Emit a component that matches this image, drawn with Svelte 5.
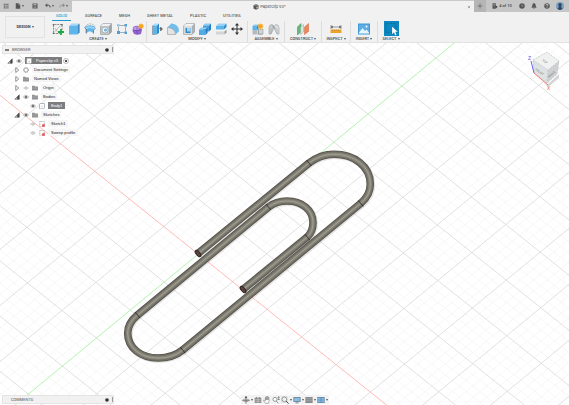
<script>
  const blue = '#5fb4ea';
  const deep = '#2f8ccc';
  const cube = (x, y, w, h, d, top, front, side) =>
    `<path d="M${x} ${y + d}l${d}-${d}h${w - d}l-${d} ${d}z" fill="${top}"/>` +
    `<path d="M${x} ${y + d}h${w - d}v${h - d}h-${w - d}z" fill="${front}"/>` +
    `<path d="M${x + w - d} ${y + d}l${d}-${d}v${h - d}l-${d} ${d}z" fill="${side}"/>`;
  const star = (x, y) =>
    `<path d="M${x} ${y - 6}l1.5 3 3.2-1-1 3.2 3 1.3-3 1.5 1 3.1-3.2-1-1.5 3-1.4-3-3.2 1 1-3.1-3-1.5 3-1.3-1-3.2 3.2 1z" fill="#f7a51c"/>`;

  // Every drawing sits in a 24 x 24 box.
  const art = {
    sketch: `<path d="M3 4v17h13M20 14V3H3" fill="none" stroke="#666" stroke-width="1.4" stroke-dasharray="4 1.5"/><path d="M5 18L17 5M6 10l5 8" stroke="#999" fill="none" stroke-width="1.2"/><path d="M1.500 2h3v3h-3zM18.500 2h3v3h-3zM1.500 19h3v3h-3z" fill="#666"/><path d="M18 12v12M12 18h12" stroke="#23a645" stroke-width="3.600"/>`,
    extrude: cube(3, 1, 20, 22, 4, '#a5d8f7', blue, deep) + `<path d="M3 23V6M22 2v17" stroke="#76838d" fill="none"/>`,
    revolve: `<path d="M1 9c3-6 19-7 22 1l-3 2v9l-5-3c-2-2-5-2-7 0l-5 3V12z" fill="${blue}"/><path d="M1 10c5-5 17-5 22 1l-3 3c-4-4-11-5-15-1z" fill="#97d1f5"/><path d="M1 9l4 4v8M23 11l-4 3v7" stroke="#70777b" fill="none" stroke-width="1.400"/><path d="M3 7c3-7 16-7 19 0" stroke="#777" fill="none" stroke-dasharray="3 2"/>`,
    hole: cube(1, 1, 22, 22, 5, '#eef0f1', '#c3c7ca', '#9da4a9') + `<circle cx="10" cy="14" r="6" fill="#f6f7f8" stroke="#7b8286"/><circle cx="11" cy="14" r="3" fill="${blue}"/><path d="M1 6l5-5h17v17l-5 5H1z" fill="none" stroke="#858c90"/>`,
    pattern: `<path d="M5 5h14M5 19h13M5 7v10M19 8v9" stroke="#808b91" stroke-width="1.300"/><g fill="#4c9fdc"><path d="M2 16h6v6H2zM17 2h5v5h-5zM17 17h5v5h-5z"/></g><path d="M2 2h5v5H2z" fill="#9bc8e7"/>`,
    form: `<path d="M2 8q8-5 15 0l3 5-2 9q-7 3-14 0L1 16z" fill="#9263cf"/><path d="M3 9q7-4 13 0l-4 5H3z" fill="#bf9be9"/><path d="M2 14q8 3 17 0M10 8v15" stroke="#6640a5" fill="none"/>` + star(18, 6),
    presspull: cube(3, 1, 13, 22, 4, '#b2ddf6', blue, deep) + `<path d="M3 5v18h6" stroke="#777" fill="none"/><path d="M16 11h4M19 8l4 4-4 4z" stroke="#555" fill="#555"/>`,
    fillet: `<path d="M1 23V9l8-8q14 2 15 15l-7 7z" fill="#c2c7ca"/><path d="M9 1q14 1 15 15l-7 7Q16 10 1 9z" fill="#72bdec"/><path d="M1 9v14h16Q16 10 1 9z" fill="#e1e3e5" stroke="#92989c"/>`,
    shell: cube(1, 1, 22, 22, 5, '#f2f3f4', '#d9dcde', '#abb1b5') + `<path d="M5 10h10v10H5z" fill="${deep}"/><path d="M8 10h7v7H8z" fill="#a4d5f3"/><path d="M1 6l5-5h17v17l-5 5H1z" fill="none" stroke="#858c90"/>`,
    combine: cube(8, 1, 16, 16, 4, '#8ccbf3', '#459fdb', '#247dbd') + cube(0, 9, 17, 15, 4, '#8ccbf3', '#53aae4', '#247dbd'),
    split: cube(2, 13, 21, 10, 4, '#f3f4f4', '#d2d5d7', '#989ea2') + cube(2, 1, 21, 12, 5, '#98d1f5', blue, deep),
    move: `<path d="M12 3v18M3 12h18" stroke="#333" stroke-width="2"/><path d="M12 0l4 5H8zM12 24l4-5H8zM0 12l5-4v8zM24 12l-5-4v8z" fill="#333"/>`,
    component: `<path d="M1 13h10v10H1z" fill="#b6babd"/><path d="M12 12h9v11h-9z" fill="#8f969a"/>` + cube(1, 3, 12, 11, 3, '#8ccbf3', blue, deep) + `<path d="M13 12h9v10h-9z" fill="#d0d4d7" stroke="#858c90"/>` + star(17, 6),
    joint: `<path d="M2 22V9q1-6 6-6 4 1 3 6l-1 5-4 8z" fill="#c9cdd0" stroke="#898f93"/><path d="M6 22v-9l4-4" fill="none" stroke="#8e9599"/><path d="M22 22V9q-1-6-6-6-4 1-3 6l1 5 4 8z" fill="#dde0e2" stroke="#898f93"/><path d="M18 22v-9l-4-4" fill="none" stroke="#8e9599"/><path d="M9 5l5 8" stroke="#777"/>`,
    construct: `<path d="M1 8l7-7v16l-7 7z" fill="#62b77a" stroke="#378f50"/><path d="M7 8l6-5v15l-6 5z" fill="#d9e6de" stroke="#8ba797"/><path d="M15 8l8-7v16l-8 6z" fill="#ea875b" stroke="#d2633a"/>`,
    inspect: `<path d="M2 8h20M2 4v8M22 4v8M2 8l3-2v4zM22 8l-3-2v4z" stroke="#666" stroke-width="1.300" fill="#666"/><path d="M1 13h22v7H1z" fill="#eaa42c"/><path d="M5 13v2M9 13v3M13 13v2M17 13v3" stroke="#a3752a"/>`,
    insert: `<path d="M0 1h24v22H0z" fill="#3f98d7"/><path d="M2 3h20v18H2z" fill="#5cade4"/><path d="M2 19l7-9 5 6 3-3 5 6v2H2z" fill="#e8f5fd"/><circle cx="17" cy="7" r="2" fill="#fff"/>`,
    select: `<path d="M0 0h24v24H0z" fill="#0d87bf"/><path d="M3 4h16v14H3z" fill="none" stroke="#14576f" stroke-dasharray="2 2"/><path d="M13 9v12l3-3 2 5 2-1-2-5h4z" fill="#fff"/>`,
    apps: `<path d="M3 3h5v5H3zM10 3h5v5h-5zM17 3h5v5h-5zM3 10h5v5H3zM10 10h5v5h-5zM17 10h5v5h-5zM3 17h5v5H3zM10 17h5v5h-5zM17 17h5v5h-5z" fill="#666"/>`,
    file: `<path d="M3 1h12l6 6v16H3z" fill="#555"/><path d="M15 1v6h6" stroke="#bbb" fill="none" stroke-width="2"/>`,
    save: `<path d="M2 2h20v20H2z" fill="#555"/><path d="M6 3h12v7H6zM7 14h10v7H7z" fill="#aaa"/><path d="M8 17h8" stroke="#555" stroke-width="2"/>`,
    undo: `<path d="M6 9h9q6 1 6 9" fill="none" stroke="#555" stroke-width="4"/><path d="M0 9l9-8v16z" fill="#555"/>`,
    redo: `<path d="M18 9H9q-6 1-6 9" fill="none" stroke="#888" stroke-width="3"/><path d="M24 9l-9-8v16z" fill="#888"/>`,
    doc: `<path d="M2 5l10-4 10 4v13l-10 5-10-5z" fill="#555"/><path d="M2 5l10 4 10-4-10-4z" fill="#888"/><path d="M14 12l5-2v6l-5 3z" fill="#ddd"/>`,
    close: `<path d="M5 5l14 14M19 5L5 19" stroke="#666" stroke-width="3"/>`,
    plus: `<path d="M12 2v20M2 12h20" stroke="#666" stroke-width="3"/>`,
    jobs: `<path d="M2 1h13v22H2z" fill="#555"/><path d="M5 6h7M5 11h6" stroke="#bbb" stroke-width="2"/><path d="M12 10l11 4-7 8z" fill="#444"/>`,
    clock: `<circle cx="12" cy="12" r="11" fill="#555"/><path d="M12 5v8h5" fill="none" stroke="#aaa" stroke-width="2.500"/>`,
    bell: `<path d="M1 19l4-5V9q1-6 5-7V0h4v2q4 1 5 7v5l4 5z" fill="#555"/><path d="M9 20h6l-3 4z" fill="#555"/>`,
    help: `<circle cx="12" cy="12" r="11" fill="#555"/><path d="M8 10q0-5 4-5 5 0 4 4-1 2-4 4v2M12 17v3" fill="none" stroke="#eee" stroke-width="2.500"/>`,
    user: `<circle cx="12" cy="12" r="12" fill="#7f9fc0"/><path d="M7 8q0-5 5-5t5 5q0 5-3 7l6 3q-3 6-8 6t-8-6l6-3q-3-2-3-7z" fill="#2d4765"/>`,
    open: `<path d="M21 3v18H3z" fill="#bbb" stroke="#444" stroke-width="2"/><path d="M21 3v18h-8V12z" fill="#444"/>`,
    shut: `<path d="M7 2l12 10L7 22z" fill="#fff" stroke="#555" stroke-width="2.500"/>`,
    eye: `<path d="M1 12Q12-1 23 12 12 25 1 12z" fill="#ddd" stroke="#999" stroke-width="2"/><circle cx="12" cy="12" r="5" fill="#777"/>`,
    hidden: `<path d="M2 12Q12 0 22 12 12 24 2 12z" fill="#f7f7f7" stroke="#aaa" stroke-width="2"/><circle cx="12" cy="12" r="3.500" fill="none" stroke="#aaa" stroke-width="2"/>`,
    part: `<path d="M3 3l3-2h16v18l-4 4H3z" fill="#fff" stroke="#999" stroke-width="2"/><path d="M9 13h5v6" stroke="#9ab" fill="none" stroke-width="2"/>`,
    gear: `<circle cx="12" cy="12" r="8" fill="#fff" stroke="#999" stroke-width="3"/><circle cx="12" cy="12" r="10" fill="none" stroke="#888" stroke-width="3" stroke-dasharray="4 4"/>`,
    folder: `<path d="M0 3h10l2 3h12v16H0z" fill="#929292"/><path d="M0 9h24M0 14h24" stroke="#bbb"/>`,
    body: `<path d="M2 5q0-3 4-3h16v17q-1 4-5 4H2z" fill="#fff" stroke="#667785" stroke-width="2"/><path d="M9 12h4v6" stroke="#89a" fill="none" stroke-width="1.500"/>`,
    profile: `<path d="M3 2h18v19H3z" fill="#fff" stroke="#777" stroke-width="2" stroke-dasharray="4 2"/><path d="M13 13h10v10H13z" fill="#e6474b"/>`,
    radio: `<circle cx="12" cy="12" r="10" fill="#fff" stroke="#777" stroke-width="2"/><circle cx="12" cy="12" r="4.500" fill="#333"/>`,
    dot: `<circle cx="12" cy="12" r="11" fill="#333"/>`,
    minus: `<path d="M0 8h24v8H0z" fill="#444"/>`,
    orbit: `<path d="M12 1v22M1 13h22" stroke="#666" stroke-width="2.500"/><ellipse cx="12" cy="13" rx="9" ry="4" fill="none" stroke="#888" stroke-width="2"/><path d="M12 0l4 6H8z" fill="#555"/>`,
    look: `<path d="M2 6h20v15H2zM5 3h5v4H5zM14 3h5v4h-5z" fill="#8d8d8d"/><path d="M4 11h16M4 16h16M12 7v14" stroke="#ddd" stroke-width="1.500"/>`,
    pan: `<path d="M7 22l-6-9 2-1 4 3V5h2v7V2h3v10V2h3v10l1-8h2v12l-2 6z" fill="#fff" stroke="#777" stroke-width="1.600"/>`,
    zoom: `<circle cx="9" cy="10" r="6" fill="#fff" stroke="#777" stroke-width="2.200"/><path d="M13 15l6 7M20 2v10M17 5l3-3 3 3M17 9l3 3 3-3" fill="none" stroke="#666" stroke-width="2"/>`,
    fit: `<path d="M2 2h17v17H2z" fill="none" stroke="#999" stroke-dasharray="4 2"/><circle cx="10" cy="10" r="7" fill="#eef6fb" stroke="#777" stroke-width="2.200"/><path d="M15 15l8 8" stroke="#555" stroke-width="3"/>`,
    display: `<path d="M1 3h22v15H1z" fill="#6f8fa8"/><path d="M4 6h16v9H4z" fill="#8dbddd"/><path d="M7 21h10M12 17v4" stroke="#777" stroke-width="2"/>`,
    grid: `<path d="M1 3h22v18H1z" fill="#8c8c8c"/><path d="M1 8h22M1 14h22" stroke="#c8c8c8"/>`,
    views: `<path d="M1 3h22v18H1z" fill="#5886ab"/><path d="M3 5h8v6H3zM13 5h8v6h-8zM3 13h8v6H3zM13 13h8v6h-8z" fill="#86b7dc"/>`
  };

  const tabs = ['SOLID', 'SURFACE', 'MESH', 'SHEET METAL', 'PLASTIC', 'UTILITIES'];
  const groups = [
    { label: 'CREATE', tools: ['sketch', 'extrude', 'revolve', 'hole', 'pattern', 'form'] },
    { label: 'MODIFY', tools: ['presspull', 'fillet', 'shell', 'combine', 'split', 'move'] },
    { label: 'ASSEMBLE', tools: ['component', 'joint'] },
    { label: 'CONSTRUCT', tools: ['construct'] },
    { label: 'INSPECT', tools: ['inspect'] },
    { label: 'INSERT', tools: ['insert'] },
    { label: 'SELECT', tools: ['select'] }
  ];
  const tree = [
    { level: 0, icons: ['open', 'eye'], label: 'Paperclip v3', root: true },
    { level: 1, icons: ['shut', 'gear'], label: 'Document Settings' },
    { level: 1, icons: ['shut', 'folder'], label: 'Named Views' },
    { level: 1, icons: ['shut', 'hidden', 'folder'], label: 'Origin' },
    { level: 1, icons: ['open', 'eye', 'folder'], label: 'Bodies' },
    { level: 2, icons: ['eye', 'body'], label: 'Body1', selected: true },
    { level: 1, icons: ['open', 'eye', 'folder'], label: 'Sketches' },
    { level: 2, icons: ['hidden', 'profile'], label: 'Sketch1' },
    { level: 2, icons: ['hidden', 'profile'], label: 'Sweep profile' }
  ];
  const nav = [
    ['orbit', true], ['look', false], ['pan', false], ['zoom', false],
    ['fit', true], ['display', true], ['grid', true], ['views', true]
  ];

  // Ground plane: two screen directions, five minor steps to a major one.
  const origin = [198.2, 254.1];
  const xDir = [34.45, 27.6];
  const yDir = [33.95, -28];
  const STEPS = 5;
  const span = 16;
  function line(shift, along, n) {
    const cx = origin[0] + shift[0] * n;
    const cy = origin[1] + shift[1] * n;
    return `M${cx - along[0] * span} ${cy - along[1] * span}L${cx + along[0] * span} ${cy + along[1] * span}`;
  }
  let minor = '';
  let major = '';
  for (let i = -span * STEPS; i <= span * STEPS; i++) {
    const d = line(xDir, yDir, i / STEPS) + line(yDir, xDir, i / STEPS);
    if (i % STEPS) minor += d;
    else if (i) major += d;
  }
  const xAxis = line(yDir, xDir, 0);
  const yAxis = line(xDir, yDir, 0);

  const wire =
    'M198 253.500L309 163C317 157 325 154.300 334 154.300C354 154.300 370.300 166 370.300 184C370.300 192 367 198 360.700 203.300' +
    'L182.700 350C176 355.500 168 358 158 358C141 358 127.700 348 127.700 333C127.700 326 131 320.500 137.500 315' +
    'L268.500 207C274 202.700 280 201 287 201C302 201 313 210 313 222.500C313 228 311.500 233 307.300 237L243 289.500';
  const seams = [[309, 163], [360.7, 203.3], [182.7, 350], [137.5, 315], [268.5, 207], [307.3, 237]];
  const ends = [[198, 253.5], [243, 289.5]];
</script>

{#snippet icon(name, size)}
  <svg class="icon {size}" viewBox="0 0 24 24" aria-hidden="true">{@html art[name]}</svg>
{/snippet}

{#snippet caret()}<span class="caret" aria-hidden="true"></span>{/snippet}

<div class="app">
  <header class="titlebar">
    <div class="quick">
      <button aria-label="Data panel">{@render icon('apps', 's')}</button>
      <button class="file" aria-label="File">{@render icon('file', 's')}{@render caret()}</button>
      <button aria-label="Save">{@render icon('save', 's')}</button>
      <button class="undo" aria-label="Undo">{@render icon('undo', 's')}{@render caret()}</button>
      <button aria-label="Redo">{@render icon('redo', 's')}{@render caret()}</button>
    </div>
    <div class="document">
      <span class="name">{@render icon('doc', 's')}Paperclip v3*</span>
      <button aria-label="Close">{@render icon('close', 'xs')}</button>
    </div>
    <div class="account">
      <button class="new" aria-label="New design">{@render icon('plus', 's')}</button>
      <button class="jobs">{@render icon('jobs', 's')}4 of 10</button>
      <button aria-label="Job status">{@render icon('clock', 's')}</button>
      <button aria-label="Notifications">{@render icon('bell', 's')}</button>
      <button aria-label="Help">{@render icon('help', 's')}</button>
      <button aria-label="Profile">{@render icon('user', 'm')}</button>
    </div>
  </header>

  <div class="ribbon">
    <button class="design">DESIGN{@render caret()}</button>
    <div class="tools">
      <nav class="tabs">
        {#each tabs as tab, i}
          <button class:active={i === 0}>{tab}</button>
        {/each}
      </nav>
      <div class="groups">
        {#each groups as group}
          <section class="group {group.label.toLowerCase()}">
            <div class="row">
              {#each group.tools as tool}
                <button class="tool" aria-label={tool}>{@render icon(tool, tool === 'select' ? 'xl' : 'l')}</button>
              {/each}
            </div>
            <button class="label">{group.label}{@render caret()}</button>
          </section>
        {/each}
      </div>
    </div>
  </div>

  <main>
    <svg class="canvas" viewBox="0 43 569 362" preserveAspectRatio="xMidYMid slice" role="img" aria-label="Paperclip model">
      <path d={minor} class="minor" />
      <path d={major} class="major" />
      <path d={xAxis} class="x-axis" />
      <path d={yAxis} class="y-axis" />
      <g fill="none" stroke-linejoin="round">
        <path d={wire} class="shadow" transform="translate(1 1)" />
        <path d={wire} stroke="#55534b" stroke-width="7.600" />
        <path d={wire} stroke="#716f64" stroke-width="6" />
        <path d={wire} stroke="#87857a" stroke-width="3.400" />
        <path d={wire} stroke="#a3a194" stroke-width="1" />
      </g>
      {#each seams as [x, y]}
        <path d="M{x - 2.5} {y - 3}L{x + 2.5} {y + 3}" class="seam" />
      {/each}
      {#each ends as [x, y]}
        <ellipse cx={x} cy={y} rx="2" ry="4" transform="rotate(-39 {x} {y})" class="end" />
      {/each}
    </svg>

    <aside class="browser">
      <div class="bar">
        {@render icon('minus', 'xs')}<span>BROWSER</span>{@render icon('dot', 'xs')}<i></i>
      </div>
      <ul>
        {#each tree as node}
          <li class="level{node.level}">
            {#each node.icons as name}
              <span class="slot">{@render icon(name, 's')}</span>
            {/each}
            <button class="node" class:root={node.root} class:selected={node.selected}>
              {#if node.root}{@render icon('part', 's')}{/if}{node.label}
            </button>
            {#if node.root}{@render icon('radio', 's')}{/if}
          </li>
        {/each}
      </ul>
    </aside>

    <svg class="viewcube" viewBox="526 50 36 42" role="img" aria-label="View cube">
      <path d="M535 73l12 12 12-11v4l-11 9z" fill="#d5d5d5" />
      <path d="M533 60l14-8 12 9-11 9z" fill="#f0f1f1" />
      <path d="M533 60l15 10-1 13-13-10z" fill="#dfe2e2" />
      <path d="M548 70l11-9-2 13-10 9z" fill="#cdd1d1" />
      <path d="M533 60l14-8 12 9-2 13-10 9-13-10zM533 60l15 10 11-9M548 70l-1 13" fill="none" stroke="#b4b8b8" stroke-dasharray="2 1" stroke-width="0.600" />
      <text x="542" y="61" transform="rotate(30 542 61)">TOP</text>
      <text x="535" y="70" transform="rotate(36 535 70)">FRONT</text>
      <text x="549" y="78" transform="rotate(-40 549 78)">RIGHT</text>
      <path d="M534 73l-3-12" stroke="#6464ee" />
      <path d="M534 73l14 12" stroke="#ee7c72" />
      <text class="axis z" x="528" y="60">Z</text>
      <text class="axis x" x="547" y="90">X</text>
    </svg>

    <div class="bar comments"><span>COMMENTS</span>{@render icon('dot', 'xs')}<i></i></div>

    <nav class="navbar">
      {#each nav as [name, menu]}
        <button aria-label={name}>{@render icon(name, 'm')}{#if menu}{@render caret()}{/if}</button>
      {/each}
    </nav>
  </main>
</div>

<style>
  :global(body) { margin: 0; }
  .app {
    height: 100vh;
    display: flex;
    flex-direction: column;
    overflow: hidden;
    background: #f1f1f1;
    color: #444;
    font: 500 4px/6px Roboto, "Liberation Sans", sans-serif;
  }
  button {
    display: flex;
    align-items: center;
    padding: 0;
    border: 0;
    background: none;
    color: inherit;
    font: inherit;
    white-space: nowrap;
  }
  .icon { display: block; flex: none; }
  .xs { width: 4px; height: 4px; }
  .s { width: 6px; height: 6px; }
  .m { width: 8px; height: 8px; }
  .l { width: 12px; height: 12px; }
  .xl { width: 15px; height: 15px; }
  .caret {
    flex: none;
    margin-left: 1px;
    border: 1px solid transparent;
    border-top: 2px solid #555;
    border-bottom: 0;
  }

  .titlebar {
    display: flex;
    height: 12px;
    flex: none;
    box-shadow: inset 0 1px #c9c9c9;
  }
  .quick {
    display: flex;
    align-items: center;
    gap: 4px;
    width: 69px;
    padding-left: 3px;
    background: #c6c6c6;
  }
  .quick .file { margin: 0 4px 0 2px; }
  .quick .undo { margin: 0 1px 0 3px; }
  .document {
    flex: 1;
    display: flex;
    align-items: center;
    padding: 1px 3px 0 0;
    font-family: Inter, sans-serif;
    font-weight: 400;
  }
  .document .name {
    flex: 1;
    display: flex;
    justify-content: center;
    align-items: center;
    gap: 1px;
  }
  .account {
    display: flex;
    align-items: center;
    justify-content: space-between;
    width: 90px;
    padding-right: 5px;
    background: #c6c6c6;
  }
  .account .new {
    align-self: stretch;
    width: 12px;
    justify-content: center;
    background: #b5b5b5;
  }
  .jobs { gap: 1px; margin-right: 1px; }

  .ribbon {
    display: flex;
    height: 31px;
    flex: none;
    box-sizing: border-box;
    border-bottom: 1px solid #e2e2e2;
  }
  .design {
    width: 40px;
    height: 22px;
    margin: 4px 5px 0;
    justify-content: center;
    border: 1px solid #e2e2e2;
    font-weight: 700;
  }
  .tabs { display: flex; gap: 17px; height: 9px; padding-left: 2px; color: #555; }
  .tabs button { box-sizing: border-box; border-bottom: 1px solid transparent; }
  .tabs .active { margin-right: -3px; padding: 0 4px; border-color: #1b9ad2; color: #1b9ad2; }
  .groups { display: flex; }
  .group {
    display: flex;
    flex-direction: column;
    align-items: center;
    height: 21px;
    padding: 0 2px;
    border-right: 1px solid #ddd;
  }
  .create { padding: 0; }
  .construct { padding: 0 10px; }
  .inspect { padding: 0 6px; }
  .insert, .select { padding: 0 5px; }
  .group:last-child { border: 0; }
  .row { display: flex; height: 15px; align-items: center; }
  .tool { width: 16px; justify-content: center; }
  .label { margin: 0 -8px; }

  main { position: relative; flex: 1; min-height: 0; background: #fff; }
  .canvas { position: absolute; inset: 0; width: 100%; height: 100%; }
  .canvas path { fill: none; }
  .minor { stroke: #f1f1f1; stroke-width: 0.600; }
  .major { stroke: #d9d9d9; stroke-width: 0.800; }
  .x-axis { stroke: #ffa9a4; stroke-width: 0.800; }
  .y-axis { stroke: #9ff09a; stroke-width: 0.800; }
  .shadow { stroke: #00000018; stroke-width: 8; }
  .seam { stroke: #2b2a26; stroke-width: 0.900; }
  .end { fill: #5c3f3a; stroke: #222; stroke-width: 0.900; }

  .bar {
    display: flex;
    align-items: center;
    box-sizing: border-box;
    width: 112px;
    height: 9px;
    padding-left: 2px;
    gap: 3px;
    background: #f1f1f1;
    border: 1px solid #e4e4e4;
    color: #777;
  }
  .bar span { flex: 1; }
  .bar i { width: 1px; height: 5px; background: #999; }
  .browser { position: absolute; left: 2px; top: 2px; }
  .comments { position: absolute; left: 2px; bottom: 1px; padding-left: 8px; }
  ul { list-style: none; margin: 2px 0 0; padding: 0; font-family: "Liberation Sans", sans-serif; font-weight: 400; }
  li { display: flex; align-items: center; height: 9px; color: #222; }
  .level0 { padding-left: 3px; }
  .level1 { padding-left: 10px; }
  .level2 { padding-left: 26px; }
  .slot { width: 9px; display: flex; justify-content: center; }
  .node { height: 7px; margin-left: 2px; padding: 0 2px; background: #f6f6f6; }
  .level2 .node { padding: 0 3px; }
  .node.root { gap: 4px; padding: 0 4px 0 1px; margin-right: 1px; background: #7c7c7c; color: #fff; }
  .node.selected { background: #7c7c7c; color: #fff; }

  .viewcube { position: absolute; right: 7px; top: 7px; width: 36px; height: 42px; }
  .viewcube text { font: 3px Roboto, sans-serif; fill: #777; }
  .viewcube .axis { font-size: 5px; }
  .viewcube .z { fill: #6464ee; }
  .viewcube .x { fill: #ee6c62; }

  .navbar {
    position: absolute;
    left: 50%;
    bottom: 1px;
    transform: translateX(-50%);
    display: flex;
    align-items: center;
    gap: 1px;
    height: 9px;
    padding: 0 1px;
    background: #f3f3f3;
  }
</style>
